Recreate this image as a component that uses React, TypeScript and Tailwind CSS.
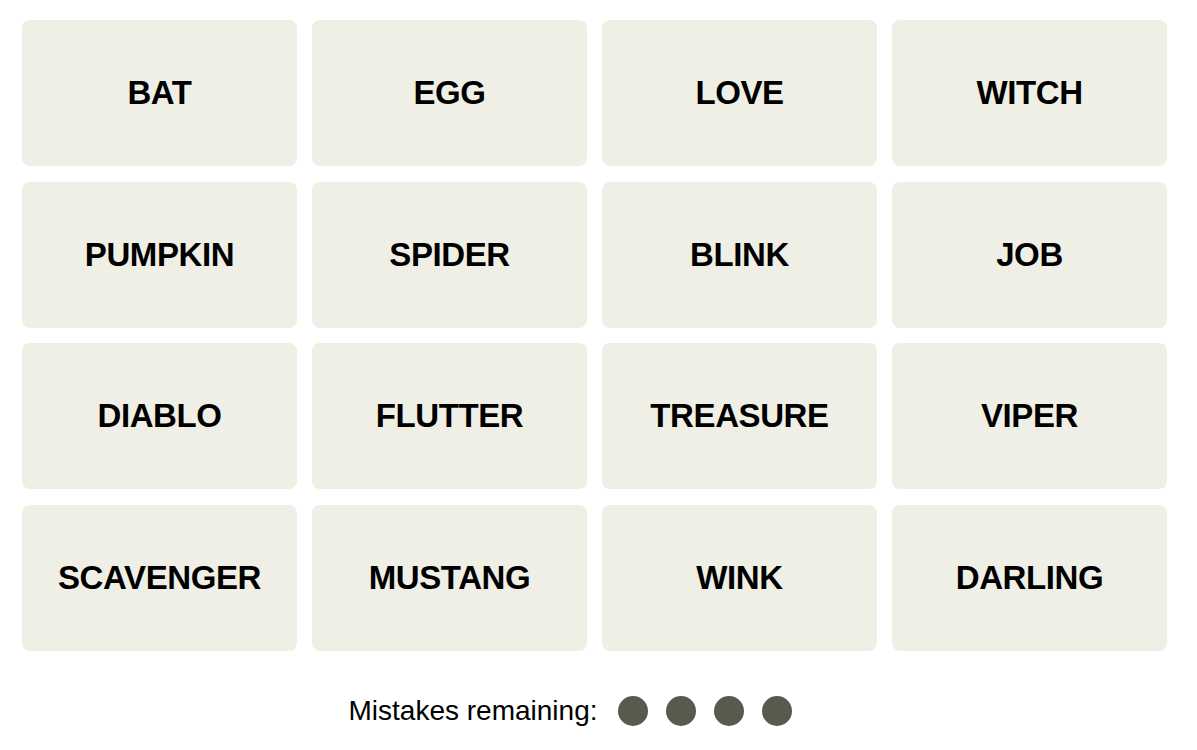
import React from "react";

// board words, row by row
const words: string[] = [
  "BAT",
  "EGG",
  "LOVE",
  "WITCH",
  "PUMPKIN",
  "SPIDER",
  "BLINK",
  "JOB",
  "DIABLO",
  "FLUTTER",
  "TREASURE",
  "VIPER",
  "SCAVENGER",
  "MUSTANG",
  "WINK",
  "DARLING",
];

const mistakesLeft = 4;

const Tile: React.FC<{ word: string }> = ({ word }) => (
  <button className="h-[146px] rounded-[8px] bg-[#efefe6] flex items-center justify-center text-[33px] font-bold tracking-[-0.4px] text-black uppercase">
    {word}
  </button>
);

export default function App() {
  return (
    <div
      className="w-[1197px] h-[750px] bg-white"
      style={{ fontFamily: '"Liberation Sans", Arial, sans-serif' }}
    >
      <div className="pl-[22px] pt-[20px] w-[1167px]">
        <div className="grid grid-cols-4 gap-x-[15px] gap-y-[15.5px]">
          {words.map((w) => (
            <Tile key={w} word={w} />
          ))}
        </div>
      </div>

      <div className="mt-[39px] flex items-center justify-center pr-[56px]">
        <span className="text-[28px] text-black mr-[21px]">Mistakes remaining:</span>
        <div className="flex gap-[18px]">
          {Array.from({ length: mistakesLeft }).map((_, i) => (
            <span key={i} className="w-[30px] h-[30px] rounded-full bg-[#5a594e]" />
          ))}
        </div>
      </div>
    </div>
  );
}
